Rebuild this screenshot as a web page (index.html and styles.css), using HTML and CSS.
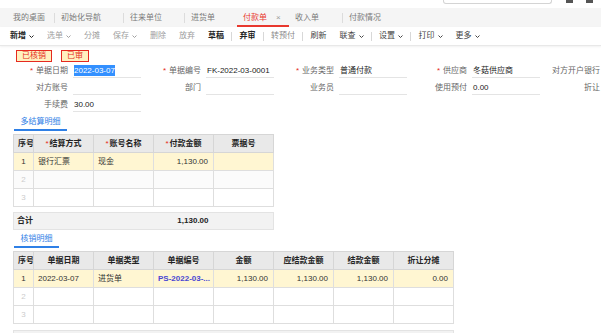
FILE: index.html
```html
<!DOCTYPE html>
<html lang="zh-CN">
<head>
  <meta charset="UTF-8">
  <meta name="viewport" content="width=device-width, initial-scale=1.0">
  <title>付款单</title>
  <link rel="stylesheet" href="styles.css">
</head>
<body>
  <div class="top">
    <div class="search"></div>
    <span class="top-icon"></span>
    <span class="top-icon"></span>
  </div>

  <div class="tabs">
    <div class="tab tab-home">我的桌面</div>
    <div class="tab tab-guide sep">初始化导航</div>
    <div class="tab tab-unit sep">往来单位</div>
    <div class="tab tab-buy sep">进货单</div>
    <div class="tab tab-active">付款单<span class="close">×</span></div>
    <div class="tab tab-income">收入单</div>
    <div class="tab sep">付款情况</div>
  </div>

  <div class="toolbar">
    <span class="btn strong">新增<svg class="caret" viewBox="0 0 5 3"><path d="M0.5 0.5L2.5 2.5L4.5 0.5"/></svg></span>
    <span class="btn off">选单<svg class="caret" viewBox="0 0 5 3"><path d="M0.5 0.5L2.5 2.5L4.5 0.5"/></svg></span>
    <span class="btn off">分摊</span>
    <span class="btn off">保存<svg class="caret" viewBox="0 0 5 3"><path d="M0.5 0.5L2.5 2.5L4.5 0.5"/></svg></span>
    <span class="btn off">删除</span>
    <span class="btn off">放弃</span>
    <span class="btn strong">草稿</span>
    <span class="divider"></span>
    <span class="btn strong">弃审</span>
    <span class="divider"></span>
    <span class="btn mid">转预付</span>
    <span class="divider"></span>
    <span class="btn">刷新</span>
    <span class="btn">联查<svg class="caret" viewBox="0 0 5 3"><path d="M0.5 0.5L2.5 2.5L4.5 0.5"/></svg></span>
    <span class="divider"></span>
    <span class="btn">设置<svg class="caret" viewBox="0 0 5 3"><path d="M0.5 0.5L2.5 2.5L4.5 0.5"/></svg></span>
    <span class="divider"></span>
    <span class="btn">打印<svg class="caret" viewBox="0 0 5 3"><path d="M0.5 0.5L2.5 2.5L4.5 0.5"/></svg></span>
    <span class="btn">更多<svg class="caret" viewBox="0 0 5 3"><path d="M0.5 0.5L2.5 2.5L4.5 0.5"/></svg></span>
  </div>

  <div class="stamps">
    <span class="stamp">已核销</span>
    <span class="stamp">已审</span>
  </div>

  <div class="form">
    <label class="req">单据日期</label><div class="field"><span class="selected">2022-03-07</span></div>
    <label class="req">单据编号</label><div class="field">FK-2022-03-0001</div>
    <label class="req">业务类型</label><div class="field">普通付款</div>
    <label class="req">供应商</label><div class="field">冬菇供应商</div>
    <label>对方开户银行</label>

    <label>对方账号</label><div class="field"></div>
    <label>部门</label><div class="field"></div>
    <label>业务员</label><div class="field"></div>
    <label>使用预付</label><div class="field">0.00</div>
    <label>折让</label>

    <label>手续费</label><div class="field">30.00</div>
  </div>

  <div class="section"><span>多结算明细</span></div>
  <table class="grid grid-small">
    <colgroup><col class="c-no"><col class="c"><col class="c"><col class="c"><col class="c"></colgroup>
    <tr class="head">
      <th>序号</th>
      <th><i>*</i>结算方式</th>
      <th><i>*</i>账号名称</th>
      <th class="mark-top"><i>*</i>付款金额</th>
      <th>票据号</th>
    </tr>
    <tr class="current">
      <td class="no">1</td><td>银行汇票</td><td>现金</td><td class="num mark-bottom">1,130.00</td><td></td>
    </tr>
    <tr class="soft"><td class="no">2</td><td></td><td></td><td></td><td></td></tr>
    <tr><td class="no">3</td><td></td><td></td><td></td><td></td></tr>
  </table>
  <table class="sum grid-small">
    <colgroup><col class="c-no"><col class="c"><col class="c"><col class="c"><col class="c"></colgroup>
    <tr><td class="label" colspan="2">合计</td><td></td><td class="num">1,130.00</td><td></td></tr>
  </table>

  <div class="section"><span>核销明细</span></div>
  <table class="grid grid-wide">
    <colgroup><col class="c-no"><col class="c"><col class="c"><col class="c"><col class="c"><col class="c"><col class="c"><col class="c"></colgroup>
    <tr class="head">
      <th>序号</th><th>单据日期</th><th>单据类型</th><th>单据编号</th>
      <th>金额</th><th>应结款金额</th><th>结款金额</th><th>折让分摊</th>
    </tr>
    <tr class="current">
      <td class="no">1</td><td>2022-03-07</td><td>进货单</td><td class="link">PS-2022-03-...</td>
      <td class="num">1,130.00</td><td class="num">1,130.00</td><td class="num">1,130.00</td><td class="num">0.00</td>
    </tr>
    <tr><td class="no">2</td><td></td><td></td><td></td><td></td><td></td><td></td><td></td></tr>
    <tr><td class="no">3</td><td></td><td></td><td></td><td></td><td></td><td></td><td></td></tr>
  </table>
  <table class="sum sum-wide grid-wide">
    <colgroup><col class="c-no"><col class="c"><col class="c"><col class="c"><col class="c"><col class="c"><col class="c"><col class="c"></colgroup>
    <tr><td class="label" colspan="2">合计</td><td></td><td></td><td class="num">1,130.00</td><td class="num">1,130.00</td><td class="num">1,130.00</td><td class="num">0.00</td></tr>
  </table>
</body>
</html>
```

FILE: styles.css
```css
body {
  margin: 0;
  width: 601px;
  height: 333px;
  overflow: hidden;
  background: #ffffff;
  color: #333333;
  font-family: "Liberation Sans", "Noto Sans CJK SC", sans-serif;
  font-size: 8px;
  line-height: 1;
}

/* top search strip */
.top {
  height: 8px;
  display: flex;
  justify-content: flex-end;
  align-items: flex-start;
  gap: 7px;
  padding-right: 8px;
}

.search {
  width: 107px;
  height: 3px;
  border: 1px solid #d4d4d4;
  border-top: none;
  border-radius: 0 0 3px 3px;
  margin-right: 1px;
}

.top-icon {
  width: 7px;
  height: 3px;
  background: #555555;
  margin-left: 6px;
}

/* tabs */
.tabs {
  height: 19px;
  display: flex;
  background: #f5f5f5;
}

.tab {
  box-sizing: border-box;
  height: 19px;
  line-height: 19px;
  padding-left: 7px;
  color: #7a7a7a;
  white-space: nowrap;
}

.tab.sep {
  background: linear-gradient(#dcdcdc, #dcdcdc) left center / 1px 10px no-repeat;
}

.tab-home { width: 54px; padding-left: 13px; }
.tab-guide { width: 69px; }
.tab-unit { width: 61px; }
.tab-buy { width: 53px; }
.tab-income { width: 53px; padding-left: 6px; }

.tab-active {
  width: 52px;
  padding-left: 6px;
  color: #e8382e;
  border-bottom: 2px solid #e8382e;
}

.close {
  color: #9a9a9a;
  margin-left: 9px;
}

/* toolbar */
.toolbar {
  height: 18px;
  display: flex;
  align-items: center;
  padding-left: 3.5px;
  border-bottom: 1px solid #e8e8e8;
  box-shadow: 0 1px 2px rgba(0, 0, 0, 0.06);
}

.btn {
  display: flex;
  align-items: center;
  padding: 0 6.5px;
  color: #444444;
  white-space: nowrap;
}

.btn.strong { color: #222222; font-weight: bold; }
.btn.off { color: #a0a0a0; }
.btn.mid { color: #8a8a8a; }

.caret {
  width: 5px;
  height: 3px;
  margin-left: 3px;
  fill: none;
  stroke: currentColor;
  stroke-width: 1;
}

.divider {
  width: 1px;
  height: 9px;
  margin: 0 0.75px;
  background: #d8d8d8;
}

/* stamps */
.stamps {
  display: flex;
  gap: 9px;
  padding: 4px 0 0 16px;
}

.stamp {
  height: 12px;
  line-height: 10px;
  box-sizing: border-box;
  padding: 0 5px;
  border: 1px solid #e52a20;
  background: #fff1c0;
  color: #e52a20;
}

/* header form */
.form {
  display: grid;
  grid-template-columns: repeat(4, 60px 73px) 60px;
  grid-auto-rows: 17px;
  padding-left: 8px;
}

.form label {
  text-align: right;
  line-height: 17px;
  color: #666666;
  white-space: nowrap;
}

.form label.req::before {
  content: "*";
  color: #e52a20;
  margin-right: 3px;
}

.field {
  margin-left: 5px;
  box-sizing: border-box;
  height: 16px;
  line-height: 17px;
  padding-left: 1px;
  border-bottom: 1px solid #e4e4e4;
  color: #222222;
  white-space: nowrap;
}

.selected {
  background: #3390ff;
  color: #ffffff;
  padding: 1px 0;
}

/* section tabs */
.section {
  display: flex;
  margin-left: 14px;
}

.section span {
  line-height: 15px;
  padding: 1px 6.5px 0;
  color: #2f80e6;
  border-bottom: 2px solid #2f80e6;
}

/* grids */
.grid,
.sum {
  border-collapse: collapse;
  table-layout: fixed;
  margin-left: 13px;
}

.grid { margin-top: 3px; }
.grid-small { width: 260px; }
.grid-wide { width: 440px; }

.c-no { width: 20px; }
.c { width: 60px; }

.grid th,
.grid td {
  height: 17px;
  padding: 0 4px;
  border: 1px solid #dedede;
  white-space: nowrap;
  overflow: hidden;
  text-overflow: clip;
}

.grid th {
  background: #e9e9e9;
  color: #222222;
  font-weight: bold;
  text-align: center;
  border-color: #d6d6d6;
}

.grid th i {
  color: #e52a20;
  font-style: normal;
  font-weight: normal;
  margin-right: 1px;
}

.grid .current td { background: #fff6d2; }
.grid .soft td { background: #fbfbfb; }

.grid td.no {
  padding: 0;
  text-align: center;
  color: #cccccc;
}

.grid .current td.no { color: #333333; }

.num { text-align: right; }
.grid td.num { padding-right: 5px; }

.link {
  color: #4a46d2;
  font-weight: bold;
}

/* red highlight box round the amount column */
.mark-top,
.mark-bottom {
  position: relative;
}

.mark-top::after,
.mark-bottom::after {
  content: "";
  position: absolute;
  left: -2px;
  right: -2px;
  border: 2px solid #e8231a;
}

.mark-top::after { top: -2px; bottom: 0; border-bottom: none; border-radius: 2px 2px 0 0; }
.mark-bottom::after { top: 0; bottom: -2px; border-top: none; border-radius: 0 0 2px 2px; }

/* totals */
.sum {
  margin-top: 5px;
  background: #f2f2f2;
  border: 1px solid #e3e3e3;
}

.sum td {
  height: 16px;
  padding: 0 4px;
  font-weight: bold;
  color: #222222;
  white-space: nowrap;
}

.sum td.label { padding-left: 3px; }
.sum td.num { padding-right: 5px; }
.sum-wide { margin-top: 6px; }
```
